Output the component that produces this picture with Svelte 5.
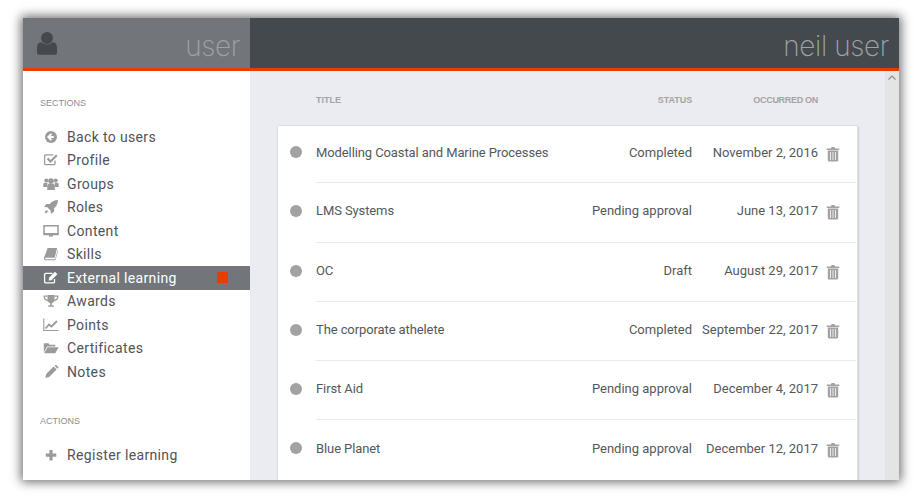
<script>
	const sections = [
		{ label: 'Back to users', icon: 'back' },
		{ label: 'Profile', icon: 'check' },
		{ label: 'Groups', icon: 'users' },
		{ label: 'Roles', icon: 'rocket' },
		{ label: 'Content', icon: 'desktop' },
		{ label: 'Skills', icon: 'book' },
		{ label: 'External learning', icon: 'edit', active: true },
		{ label: 'Awards', icon: 'trophy' },
		{ label: 'Points', icon: 'chart' },
		{ label: 'Certificates', icon: 'folder' },
		{ label: 'Notes', icon: 'pencil' }
	];

	const rows = [
		{ title: 'Modelling Coastal and Marine Processes', status: 'Completed', date: 'November 2, 2016' },
		{ title: 'LMS Systems', status: 'Pending approval', date: 'June 13, 2017' },
		{ title: 'OC', status: 'Draft', date: 'August 29, 2017' },
		{ title: 'The corporate athelete', status: 'Completed', date: 'September 22, 2017' },
		{ title: 'First Aid', status: 'Pending approval', date: 'December 4, 2017' },
		{ title: 'Blue Planet', status: 'Pending approval', date: 'December 12, 2017' }
	];
</script>

{#snippet icon(name)}
	<svg class="icon" viewBox="0 0 16 16" width="16" height="16" aria-hidden="true">
		{#if name === 'back'}
			<circle cx="8" cy="8" r="6" fill="currentColor" />
			<path d="M8.4 4.8 5.2 8l3.2 3.2M5.6 8h5.2" fill="none" stroke="#fff" stroke-width="1.8" />
		{:else if name === 'check'}
			<path d="M12 8.500v3a1.200 1.200 0 0 1-1.200 1.200H2.800a1.200 1.200 0 0 1-1.200-1.200V4a1.200 1.200 0 0 1 1.200-1.200h7.500" fill="none" stroke="currentColor" stroke-width="1.300" />
			<path d="M4.500 6.500 7.500 9.500l6.300-6.300" fill="none" stroke="currentColor" stroke-width="2.200" />
		{:else if name === 'users'}
			<circle cx="3.300" cy="4.600" r="2" fill="currentColor" />
			<circle cx="12.700" cy="4.600" r="2" fill="currentColor" />
			<circle cx="8" cy="5" r="2.800" fill="currentColor" />
			<path d="M.3 10.800V8.200c0-1 .8-1.500 1.600-1.500h2.600L4 11H.3zM15.700 10.800V8.200c0-1-.8-1.500-1.600-1.500h-2.600l.5 4.300h3.700z" fill="currentColor" />
			<path d="M4.200 14V10c0-1.800 1.100-2.600 2.300-2.600h3c1.200 0 2.300.8 2.300 2.600v4z" fill="currentColor" />
		{:else if name === 'rocket'}
			<path d="M15 1c-3.800.2-6.400 1.600-8.200 3.900H3.400L1 8l3.300.3 3.400 3.400.3 3.300 3.100-2.400V9.200c2.300-1.800 3.700-4.400 3.900-8.200zM3.600 11c-1 .6-1.600 1.600-1.800 3.200 1.600-.2 2.600-.8 3.200-1.800z" fill="currentColor" />
		{:else if name === 'desktop'}
			<path d="M1 2.800h14v8.800H1z" fill="none" stroke="currentColor" stroke-width="1.500" />
			<path d="M1 10h14v2H1zM6.200 12h3.600l.4 1.500H5.800z" fill="currentColor" />
		{:else if name === 'book'}
			<path d="M4.800 2h9.200l-2.400 9.800H3c-.6 0-.9.300-.9.700 0 .5.400.800 1 .800h9l2.500-9 .5.500-2.700 9.500H3c-1.500 0-2.300-1-2.100-2.300z" fill="currentColor" />
			<path d="M4.800 2h9.200l-2.400 9H2.400z" fill="currentColor" />
		{:else if name === 'edit'}
			<path d="M11.500 9v2.700a1.200 1.200 0 0 1-1.200 1.200H2.800a1.200 1.200 0 0 1-1.200-1.200V4.500a1.200 1.200 0 0 1 1.200-1.200h6.700" fill="none" stroke="currentColor" stroke-width="1.300" />
			<path d="M6 7.800 12 1.800l2.400 2.400-6 6-2.700.400z" fill="currentColor" />
		{:else if name === 'trophy'}
			<path d="M4.500 2h7v4.500c0 2-1.500 3.300-2.700 3.800v2h1.900v1.500H5.300v-1.500h1.900v-2C6 9.800 4.500 8.500 4.500 6.500z" fill="currentColor" />
			<path d="M4.500 3.200H1.200c0 2.800 1.200 4 3.800 4.300M11.500 3.200h3.300c0 2.800-1.200 4-3.800 4.300" fill="none" stroke="currentColor" stroke-width="1.300" />
		{:else if name === 'chart'}
			<path d="M.8 1.500v12h14.700" fill="none" stroke="currentColor" stroke-width="1.100" />
			<path d="M2.500 11.500 6 7.500l2.500 2L14 4" fill="none" stroke="currentColor" stroke-width="1.800" />
		{:else if name === 'folder'}
			<path d="M.8 12.500V3.200h4.700l1 1.500h5.800v1.900H4z" fill="currentColor" />
			<path d="M1.200 13.300 4.500 7.300h11.100l-3.300 6z" fill="currentColor" />
		{:else if name === 'pencil'}
			<path d="M2.300 14 3.200 10l7.400-7.400 3 3L6.200 13z" fill="currentColor" />
			<path d="M11.500 1.800l.6-.6c.4-.4 1-.4 1.400 0l1.600 1.600c.4.400.4 1 0 1.400l-.6.6z" fill="currentColor" />
		{:else if name === 'plus'}
			<path d="M8 3v10.500M2.800 8.200h10.500" fill="none" stroke="currentColor" stroke-width="3.200" />
		{/if}
	</svg>
{/snippet}

<div class="window">
	<header>
		<div class="user-tab">
			<svg class="avatar" viewBox="0 0 20 24" width="20" height="24" aria-hidden="true">
				<circle cx="10" cy="7" r="6" fill="currentColor" />
				<path d="M0 21.500v-5.500c0-3 1.800-4.800 4.500-4.800 1.300 1.400 3.300 2.200 5.500 2.200s4.200-.8 5.500-2.200c2.700 0 4.500 1.800 4.500 4.800v5.500c0 1.300-1 2.300-2.300 2.300H2.300C1 23.800 0 22.800 0 21.500z" fill="currentColor" />
			</svg>
			<span class="tab-name">user</span>
		</div>
		<div class="full-name">neil user</div>
	</header>

	<div class="body">
		<aside>
			<h4>Sections</h4>
			<ul>
				{#each sections as item}
					<li class:active={item.active}>
						{@render icon(item.icon)}
						<span>{item.label}</span>
						{#if item.active}<i class="marker"></i>{/if}
					</li>
				{/each}
			</ul>
			<h4 class="actions">Actions</h4>
			<ul>
				<li>
					{@render icon('plus')}
					<span>Register learning</span>
				</li>
			</ul>
		</aside>

		<main>
			<div class="columns">
				<span class="col-title">Title</span>
				<span class="col-status">Status</span>
				<span class="col-date">Occurred on</span>
			</div>
			<div class="card">
				{#each rows as row}
					<div class="row">
						<i class="dot"></i>
						<div class="cells">
							<span class="title">{row.title}</span>
							<span class="status">{row.status}</span>
							<span class="date">{row.date}</span>
							<svg class="trash" viewBox="0 0 14 16" width="14" height="16" aria-hidden="true">
								<path d="M4.800 2.600 5.600 1h2.800l.8 1.600H13.300v1.300H.7V2.600z" fill="currentColor" />
								<path d="M1.800 4.600h10.400v9.500c0 .9-.6 1.500-1.400 1.500H3.200c-.8 0-1.400-.6-1.400-1.500zM4.200 6v8h.8V6zm2.400 0v8h.8V6zm2.400 0v8h.8V6z" fill="currentColor" fill-rule="evenodd" />
							</svg>
						</div>
					</div>
				{/each}
			</div>
		</main>

		<div class="scrollbar">
			<svg viewBox="0 0 14 14" width="14" height="14" aria-hidden="true">
				<path d="M3.500 8.500 7 5l3.500 3.500" fill="none" stroke="#8f8f8f" stroke-width="1.200" />
			</svg>
		</div>
	</div>
</div>

<style>
	:global(html), :global(body) {
		margin: 0;
		height: 100%;
		overflow: hidden;
		background: #fff;
	}

	.window {
		box-sizing: border-box;
		width: 876px;
		height: 462px;
		margin: 18px 0 0 23px;
		display: flex;
		flex-direction: column;
		background: #fff;
		box-shadow: 0 0 10px 2px rgba(0, 0, 0, 0.58);
		font-family: Roboto, "Open Sans", sans-serif;
		overflow: hidden;
	}

	header {
		flex: none;
		display: flex;
		height: 50px;
		background: #44494d;
		border-bottom: 3px solid #e63e00;
		color: #9ea3a6;
		font-family: Inter, Lato, sans-serif;
		font-weight: 200;
		font-size: 28px;
		letter-spacing: -0.4px;
	}

	.user-tab {
		box-sizing: border-box;
		width: 227px;
		display: flex;
		align-items: center;
		justify-content: space-between;
		padding: 0 10px 0 14px;
		background: #72767a;
	}

	.avatar {
		color: #44494d;
	}

	.tab-name, .full-name {
		line-height: 56px;
		height: 50px;
	}

	.full-name {
		flex: 1;
		text-align: right;
		padding-right: 10px;
	}

	.body {
		flex: 1;
		min-height: 0;
		display: flex;
	}

	aside {
		flex: none;
		width: 227px;
		padding-top: 27px;
	}

	h4 {
		margin: 0 0 16px 17px;
		font-family: "Liberation Sans", sans-serif;
		font-size: 9px;
		line-height: 11px;
		font-weight: 400;
		text-transform: uppercase;
		color: #8d8d8d;
	}

	h4.actions {
		margin-top: 32px;
		margin-bottom: 17px;
	}

	ul {
		list-style: none;
		margin: 0;
		padding: 0;
	}

	li {
		display: flex;
		align-items: center;
		height: 23.5px;
		padding-left: 20px;
		font-size: 14px;
		letter-spacing: 0.35px;
		color: #50535a;
	}

	li .icon {
		color: #9b9b9b;
		margin-right: 8px;
	}

	li.active {
		background: #72767a;
		color: #fff;
	}

	li.active .icon {
		color: #fff;
	}

	.marker {
		width: 11px;
		height: 11px;
		margin-left: auto;
		margin-right: 22px;
		background: #e63e00;
	}

	main {
		flex: 1;
		min-width: 0;
		background: #ebecf1;
		padding: 0 27px;
	}

	.columns {
		display: flex;
		height: 54px;
		align-items: center;
		padding-top: 4px;
		box-sizing: border-box;
		font-family: "Liberation Sans", sans-serif;
		font-size: 9px;
		font-weight: 700;
		text-transform: uppercase;
		color: #a3a3a3;
	}

	.col-title {
		margin-left: 39px;
		flex: 1;
	}

	.col-status {
		margin-right: 61px;
	}

	.col-date {
		margin-right: 40px;
		letter-spacing: -0.3px;
	}

	.card {
		background: #fff;
		border: 1px solid #dcdcdc;
		border-bottom: none;
		box-shadow: 1px 1px 2px rgba(0, 0, 0, 0.12);
		border-radius: 2px 2px 0 0;
	}

	.row {
		display: flex;
		align-items: stretch;
		height: 59.25px;
	}

	.row:first-child {
		height: 57.25px;
	}

	.dot {
		flex: none;
		width: 12px;
		height: 12px;
		margin: 22px 14px 0 12px;
		border-radius: 50%;
		background: #a2a2a2;
	}

	.row:first-child .dot {
		margin-top: 20px;
	}

	.cells {
		flex: 1;
		min-width: 0;
		display: flex;
		align-items: center;
		padding-bottom: 3px;
		margin-right: 1px;
		box-sizing: border-box;
		border-bottom: 1px solid #e9e9e9;
		font-size: 13px;
		color: #55585b;
	}

	.row:last-child .cells {
		border-bottom: none;
	}

	.title {
		flex: 1;
		letter-spacing: -0.1px;
	}

	.date {
		width: 126px;
		text-align: right;
	}

	.trash {
		flex: none;
		margin: 3px 16px 0 8px;
		color: #a2a2a2;
	}

	.scrollbar {
		flex: none;
		width: 14px;
		background: #e4e4e4;
	}

	.scrollbar svg {
		display: block;
	}
</style>
